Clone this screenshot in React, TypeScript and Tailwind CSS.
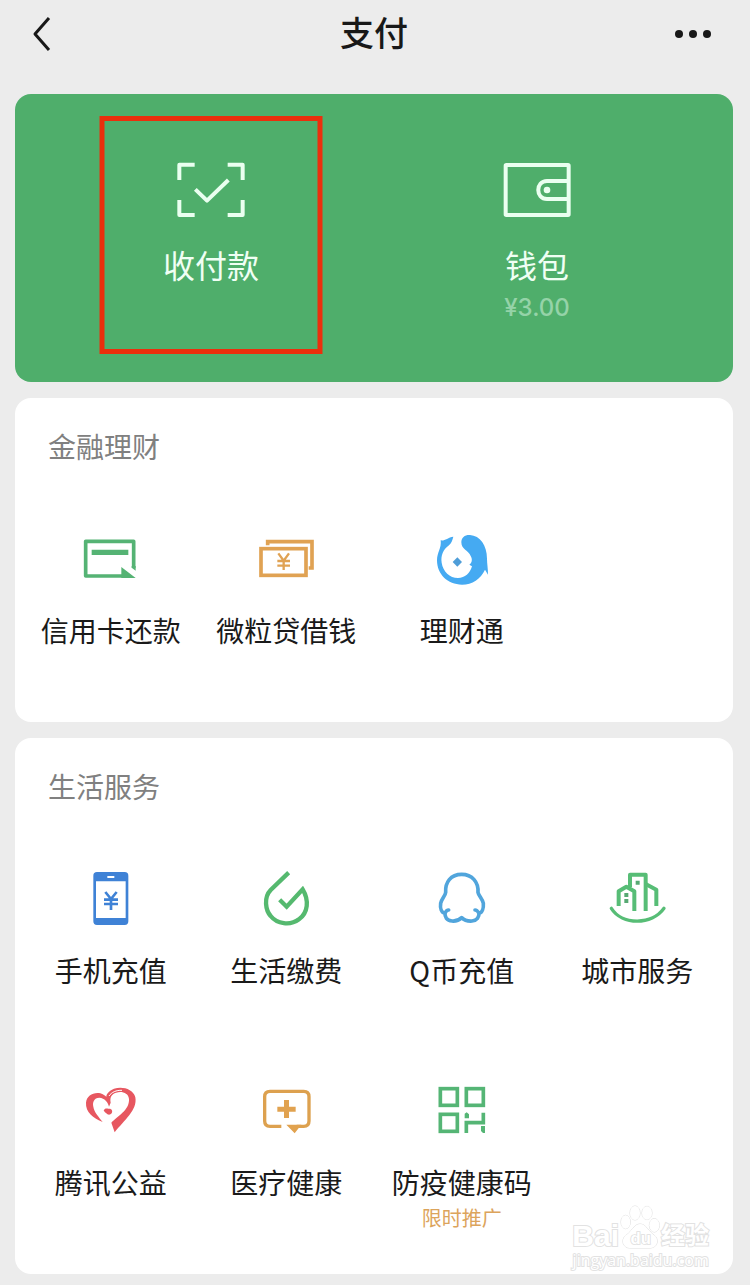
import type { ReactNode } from "react";

interface ServiceItem {
  label: string;
  note?: string;
  icon: ReactNode;
}

const CreditCardIcon = () => (
  <svg viewBox="177 54 192 192" className="size-16" aria-hidden="true">
    <path d="M341 174V94H197V198H310" fill="none" stroke="#55b374" strokeWidth="11" strokeLinejoin="round" />
    <path d="M215 119H325V135H215ZM304 171L347 204H304ZM335 173L347 182V168H335Z" fill="#55b374" />
  </svg>
);

const LoanIcon = () => (
  <svg viewBox="42 54 192 192" className="size-16" aria-hidden="true">
    <g fill="none" stroke="#e0a253">
      <path d="M83 106V95H216V174H206" strokeWidth="11" />
      <rect x="63" y="116" width="135" height="80" strokeWidth="11" />
      <path d="M115 130L131 152L147 130M131 150V180M112 153H150M112 167H150" strokeWidth="7" />
    </g>
  </svg>
);

const FundIcon = () => (
  <svg viewBox="570 54 192 192" className="size-16" aria-hidden="true">
    <path
      d="M602 91C613 94 624 82 640 80C637 91 635 98 627 106C609 119 602 137 605 158C609 184 629 204 654 204C675 204 690 190 696 169L688 164C696 159 698 148 692 138C686 121 664 119 664 97C664 82 675 74 690 75C720 77 741 106 741 146C741 160 744 176 744 194L735 179C722 207 697 224 666 224C623 224 591 193 591 151C591 127 605 115 602 91Z"
      fill="#45aaf2"
    />
    <path d="M652 142L666 156L652 170L638 156Z" fill="#4e9dd8" />
  </svg>
);

const PhoneIcon = () => (
  <svg viewBox="117 54 192 192" className="size-16" aria-hidden="true">
    <path
      fillRule="evenodd"
      d="M171 66H254Q265 66 265 77V214Q265 225 254 225H171Q160 225 160 214V77Q160 66 171 66ZM168 94V204H257V94ZM202 78V84H223V78Z"
      fill="#3f82d6"
    />
    <path d="M196 126L213 147L230 126M213 147V180M192 149H234M192 162H234" fill="none" stroke="#3f82d6" strokeWidth="8" />
  </svg>
);

const BillIcon = () => (
  <svg viewBox="642 54 192 192" className="size-16" aria-hidden="true">
    <path
      d="M746 68L692 120C670 143 677 181 692 198C711 222 750 228 777 208C804 189 808 151 788 118L740 170L719 149"
      fill="none"
      stroke="#55b96f"
      strokeWidth="13"
      strokeLinejoin="miter"
    />
  </svg>
);

const QCoinIcon = () => (
  <svg viewBox="120 54 192 192" className="size-16" aria-hidden="true">
    <path
      d="M176 180C171 180 168 183 165 190C154 188 150 174 152 160C154 147 166 138 167 127C165 97 182 73 215 73C247 73 266 97 264 127C266 138 278 147 280 160C281 174 277 188 267 190C263 183 260 180 255 180M165 188C164 202 170 212 186 213C200 214 208 210 215 203C222 210 231 214 246 213C261 212 268 202 267 188"
      fill="none"
      stroke="#51a5dc"
      strokeWidth="11"
      strokeLinecap="round"
      strokeLinejoin="round"
    />
  </svg>
);

const CityIcon = () => (
  <svg viewBox="645 54 192 192" className="size-16" aria-hidden="true">
    <g fill="none" stroke="#57bd76" strokeWidth="12" strokeLinejoin="round">
      <path d="M686 168V124L709 110L733 124V183" />
      <path d="M720 112V74H767V183" />
      <path d="M767 102L799 119V168" />
      <path d="M664 175C696 226 786 226 822 175" strokeWidth="10" strokeLinecap="round" />
    </g>
    <path d="M737 92H749V104H737ZM703 129H715V141H703ZM703 147H715V159H703Z" fill="#57a973" />
  </svg>
);

const CharityIcon = () => (
  <svg viewBox="117 30 192 192" className="size-16" aria-hidden="true">
    <path
      d="M188 156C160 145 136 126 138 98C140 77 160 66 181 70C189 72 196 77 200 82C196 77 205 62 222 56C246 48 280 56 286 82C293 120 253 151 224 187L214 158C230 140 269 121 267 87C265 67 244 63 228 68C216 72 209 80 212 98L207 110C204 96 194 84 178 83C162 83 157 97 160 110C163 128 177 141 188 156Z"
      fill="#e75760"
    />
    <path d="M207 78C214 67 229 60 246 61" fill="none" stroke="#fff" strokeWidth="3" />
    <path d="M191 121C197 112 203 117 206 116C215 115 219 122 215 130C211 136 202 135 199 130C196 128 194 127 191 121Z" fill="#e75760" />
  </svg>
);

const MedicalIcon = () => (
  <svg viewBox="642 30 192 192" className="size-16" aria-hidden="true">
    <path
      d="M724 169H690Q674 169 674 153V80Q674 64 690 64H791Q807 64 807 80V153Q807 169 791 169H770"
      fill="none"
      stroke="#dda14f"
      strokeWidth="10"
    />
    <path d="M739 164H784L764 190ZM732 90H747V110H767V125H747V144H732V125H712V110H732Z" fill="#e1a24f" />
  </svg>
);

const HealthCodeIcon = () => (
  <svg viewBox="150 30 192 192" className="size-16" aria-hidden="true">
    <g fill="none" stroke="#55b575" strokeWidth="11">
      <rect x="181" y="56" width="51" height="50" />
      <rect x="259" y="56" width="51" height="50" />
      <rect x="181" y="133" width="51" height="51" />
      <path d="M259 189V158H310V128" />
    </g>
    <path d="M254 131L260 127L267 133V145H254ZM303 168H315V189H309L303 183Z" fill="#55b575" />
  </svg>
);

const financeItems: ServiceItem[] = [
  { label: "信用卡还款", icon: <CreditCardIcon /> },
  { label: "微粒贷借钱", icon: <LoanIcon /> },
  { label: "理财通", icon: <FundIcon /> },
];

const lifeItems: ServiceItem[] = [
  { label: "手机充值", icon: <PhoneIcon /> },
  { label: "生活缴费", icon: <BillIcon /> },
  { label: "Q币充值", icon: <QCoinIcon /> },
  { label: "城市服务", icon: <CityIcon /> },
  { label: "腾讯公益", icon: <CharityIcon /> },
  { label: "医疗健康", icon: <MedicalIcon /> },
  { label: "防疫健康码", note: "限时推广", icon: <HealthCodeIcon /> },
];

function ServiceGrid({ items }: { items: ServiceItem[] }) {
  return (
    <div className="mt-[62px] grid grid-cols-4 gap-y-[90px] px-2">
      {items.map((item) => (
        <button key={item.label} type="button" className="flex flex-col items-center">
          {item.icon}
          <span className="mt-[18px] text-[28px] leading-10 whitespace-nowrap text-[#1a1a1a]">
            {item.label}
          </span>
          {item.note && (
            <span className="text-xl leading-8 text-[#dca45c]">{item.note}</span>
          )}
        </button>
      ))}
    </div>
  );
}

function SectionTitle({ children }: { children: ReactNode }) {
  return <h2 className="px-[33px] text-[28px] leading-10 text-[#808080]">{children}</h2>;
}

function Watermark() {
  return (
    <div className="pointer-events-none absolute right-6 bottom-1 flex flex-col items-center text-white [-webkit-text-stroke:2px_#e2e2e2] [paint-order:stroke_fill]">
      <div className="flex items-end font-['Liberation_Sans','Noto_Sans_CJK_SC',sans-serif] font-bold">
        <span className="text-3xl leading-7">Bai</span>
        <svg viewBox="180 38 126 138" className="h-[46px] w-[42px]" aria-hidden="true">
          <g fill="#fff" stroke="#dedede" strokeWidth="3">
            <ellipse cx="200" cy="92" rx="14" ry="20" />
            <ellipse cx="228" cy="65" rx="15" ry="21" />
            <ellipse cx="264" cy="65" rx="15" ry="20" />
            <ellipse cx="286" cy="102" rx="15" ry="20" />
            <path d="M243 98C224 98 216 124 201 132C184 145 192 170 212 170H275C298 168 300 142 285 131C269 122 262 98 243 98Z" />
            <text x="245" y="158" textAnchor="middle" fontSize="50" strokeWidth="5">
              du
            </text>
          </g>
        </svg>
        <span className="text-2xl leading-7">经验</span>
      </div>
      <span className="font-['Open_Sans',sans-serif] text-base leading-5">jingyan.baidu.com</span>
    </div>
  );
}

export default function App() {
  return (
    <div className="bg-[#ececec] pr-[17px] pb-[11px] pl-[15px] font-['Noto_Sans_CJK_SC',sans-serif]">
      <header className="mb-[26px] grid h-[68px] grid-cols-3 items-center">
        <button type="button" aria-label="返回" className="ml-4 justify-self-start">
          <svg viewBox="0 0 20 36" className="h-9 w-5" fill="none" stroke="#181818" strokeWidth="3">
            <path d="M18 2L4 18L18 34" strokeLinejoin="round" />
          </svg>
        </button>
        <h1 className="pb-1 text-center text-[34px] leading-10 font-medium text-[#181818]">支付</h1>
        <button type="button" aria-label="更多" className="mr-5 justify-self-end">
          <svg viewBox="0 0 40 10" className="h-[10px] w-10" fill="#181818">
            <circle cx="6" cy="5" r="4" />
            <circle cx="20" cy="5" r="4" />
            <circle cx="34" cy="5" r="4" />
          </svg>
        </button>
      </header>

      <main className="flex flex-col gap-4">
        <section className="grid grid-cols-2 rounded-2xl bg-[#4fae6b] px-[33px] text-[#f0fff4]">
          <button type="button" className="relative flex flex-col items-center pt-[66px] pb-[58px]">
            <svg viewBox="257 180 216 180" className="h-[60px] w-[72px]" fill="none" stroke="#eafff0" strokeWidth="12" strokeLinejoin="round">
              <path d="M270 240V194H316M415 194H460V240M460 300V345H415M316 345H270V300" />
              <path d="M318 268L353 302L417 240" />
            </svg>
            <span className="mt-6 text-[32px] leading-10">收付款</span>
            <span className="absolute top-[22px] left-1/2 h-[238px] w-[223px] -translate-x-1/2 border-5 border-[#eb2f0c]" />
          </button>
          <button type="button" className="flex flex-col items-center pt-[66px] pb-[58px]">
            <svg viewBox="91 60 216 180" className="h-[60px] w-[72px]" fill="none" stroke="#eafff0" strokeWidth="12" strokeLinejoin="round">
              <rect x="105" y="75" width="189" height="150" rx="2" />
              <path d="M294 123H229C194 123 194 177 229 177H294" />
              <circle cx="229" cy="150" r="10" fill="#eafff0" stroke="none" />
            </svg>
            <span className="mt-6 text-[32px] leading-10">钱包</span>
            <span className="mt-2 font-['Inter',sans-serif] text-2xl leading-8 font-medium text-[#95d3a8]">
              ¥3.00
            </span>
          </button>
        </section>

        <section className="rounded-2xl bg-white pt-7 pb-[72px]">
          <SectionTitle>金融理财</SectionTitle>
          <ServiceGrid items={financeItems} />
        </section>

        <section className="relative rounded-2xl bg-white pt-7 pb-10">
          <SectionTitle>生活服务</SectionTitle>
          <ServiceGrid items={lifeItems} />
          <Watermark />
        </section>
      </main>
    </div>
  );
}
